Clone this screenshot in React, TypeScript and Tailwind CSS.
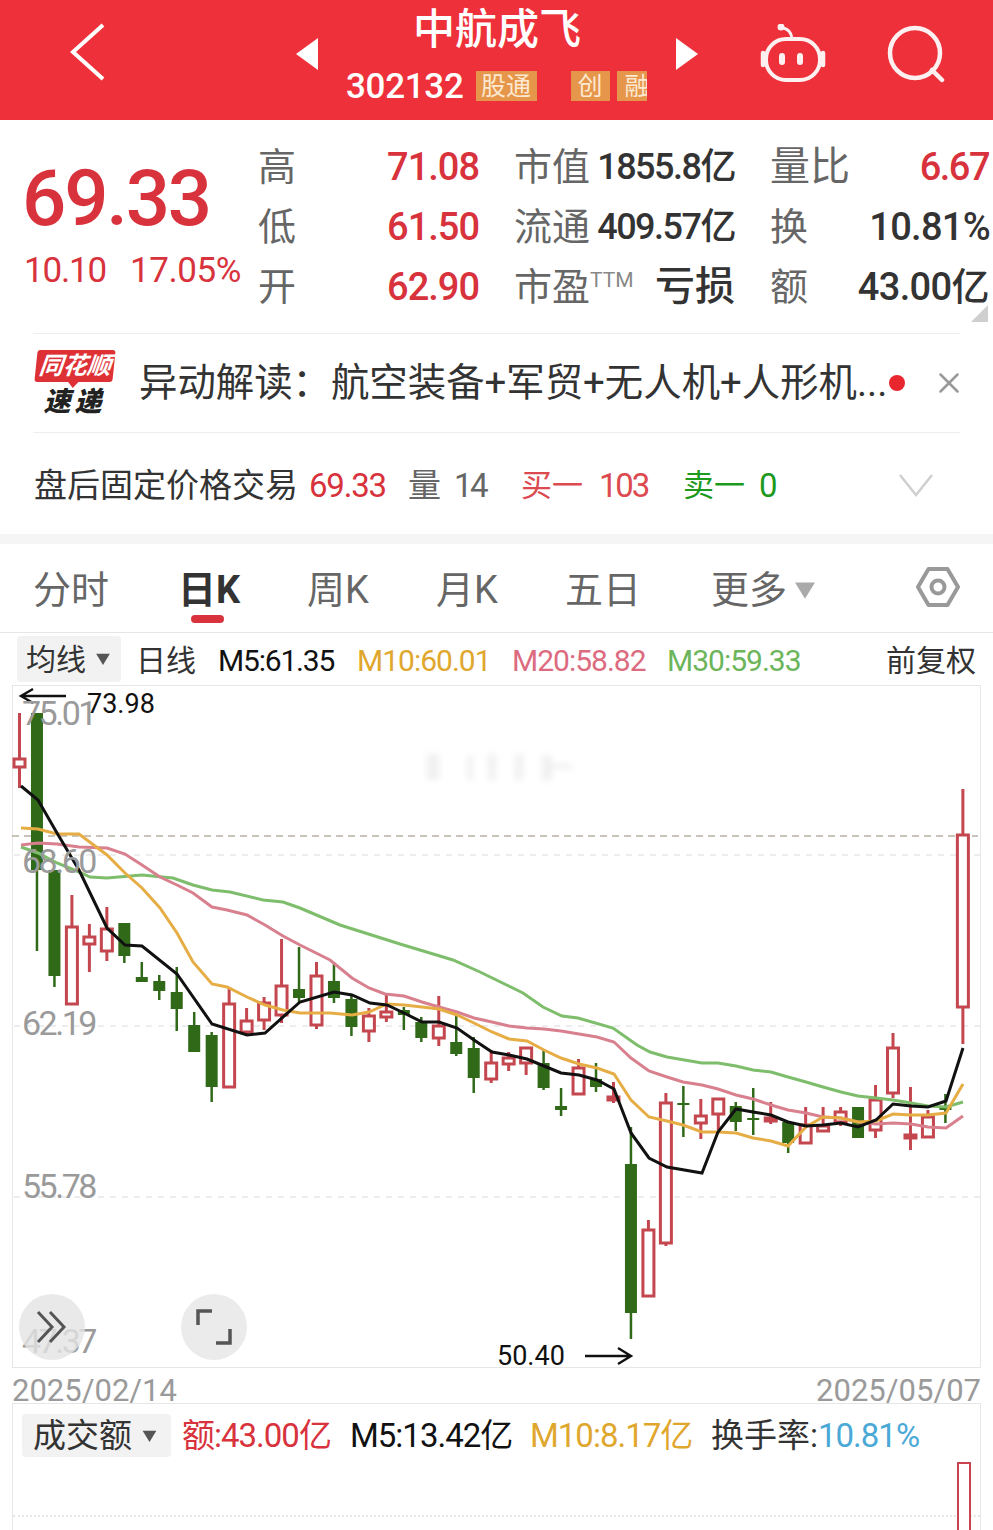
import { X } from "lucide-react";

const FONT_CJK = "font-['Roboto','Noto_Sans_CJK_SC',sans-serif]";

// top wick, body top, body bottom, low wick, colour
const CANDLES: [number, number, number, number, "r" | "g"][] = [
  [713, 759, 767, 788, "r"],
  [713, 713, 870, 951, "g"],
  [870, 870, 976, 987, "g"],
  [895, 927, 1004, 1004, "r"],
  [924, 937, 944, 972, "r"],
  [907, 929, 951, 961, "r"],
  [923, 923, 956, 963, "g"],
  [962, 977, 982, 982, "g"],
  [975, 981, 991, 1000, "g"],
  [967, 992, 1009, 1031, "g"],
  [1012, 1025, 1052, 1052, "g"],
  [1032, 1035, 1087, 1102, "g"],
  [987, 1004, 1087, 1088, "r"],
  [1008, 1021, 1032, 1036, "r"],
  [997, 1003, 1020, 1030, "r"],
  [939, 986, 1015, 1023, "r"],
  [947, 989, 998, 1003, "g"],
  [962, 976, 1025, 1029, "r"],
  [962, 981, 998, 1003, "g"],
  [995, 999, 1027, 1036, "g"],
  [1008, 1016, 1031, 1042, "r"],
  [995, 1012, 1017, 1022, "r"],
  [1007, 1010, 1015, 1030, "g"],
  [1017, 1022, 1038, 1042, "g"],
  [996, 1026, 1038, 1046, "r"],
  [1015, 1042, 1054, 1056, "g"],
  [1037, 1048, 1078, 1093, "g"],
  [1050, 1063, 1079, 1083, "r"],
  [1052, 1058, 1064, 1071, "r"],
  [1047, 1048, 1063, 1075, "r"],
  [1050, 1063, 1088, 1090, "g"],
  [1088, 1106, 1110, 1116, "g"],
  [1059, 1068, 1094, 1094, "r"],
  [1063, 1079, 1087, 1092, "g"],
  [1082, 1097, 1100, 1103, "r"],
  [1127, 1164, 1313, 1339, "g"],
  [1220, 1230, 1296, 1296, "r"],
  [1093, 1103, 1243, 1246, "r"],
  [1086, 1103, 1105, 1137, "g"],
  [1099, 1116, 1123, 1139, "r"],
  [1099, 1099, 1114, 1130, "r"],
  [1102, 1106, 1122, 1131, "g"],
  [1088, 1118, 1120, 1135, "g"],
  [1102, 1118, 1121, 1124, "r"],
  [1122, 1122, 1143, 1153, "g"],
  [1107, 1125, 1143, 1143, "r"],
  [1107, 1126, 1131, 1131, "r"],
  [1107, 1112, 1122, 1126, "r"],
  [1107, 1107, 1138, 1138, "g"],
  [1085, 1100, 1130, 1138, "r"],
  [1033, 1048, 1093, 1098, "r"],
  [1087, 1135, 1138, 1150, "r"],
  [1110, 1117, 1137, 1137, "r"],
  [1094, 1107, 1110, 1123, "g"],
  [789, 835, 1007, 1044, "r"],
];

const M30 =
  "21,847 38,853 57,863 79,872 90,877 107,878 142,875 173,878 193,885 212,890 230,892 263,900 283,902 300,908 340,925 400,944 453,960 480,972 523,993 543,1007 562,1016 578,1018 613,1028 637,1045 650,1052 667,1057 702,1063 718,1063 736,1066 753,1070 771,1072 788,1077 806,1082 823,1087 841,1092 858,1096 876,1098 893,1100 911,1103 928,1106 946,1107 963,1102";
const M20 =
  "21,845 38,843 57,844 79,847 107,848 125,854 142,865 160,877 177,885 193,893 212,907 227,910 247,915 265,925 283,936 300,945 330,960 352,978 369,988 385,994 404,996 422,1002 439,1007 457,1012 474,1018 492,1022 509,1026 527,1028 544,1029 561,1031 579,1034 597,1037 614,1042 631,1058 649,1071 667,1077 683,1082 702,1085 718,1089 736,1095 753,1099 771,1105 788,1110 806,1113 823,1117 841,1118 858,1122 876,1124 893,1123 911,1124 928,1127 946,1128 963,1116";
const M10 =
  "21,828 38,829 57,834 79,834 107,855 125,873 142,888 160,908 177,933 193,962 212,984 227,987 247,997 265,1005 283,1010 300,1013 330,1013 352,1015 369,1012 387,1004 404,1005 422,1007 439,1009 457,1015 474,1023 492,1032 509,1039 527,1041 544,1050 561,1058 579,1064 597,1068 614,1074 631,1100 649,1117 667,1121 683,1125 702,1132 718,1132 736,1133 753,1138 771,1141 788,1146 806,1127 823,1117 841,1118 858,1122 876,1121 893,1114 911,1115 928,1115 946,1113 963,1084";
const M5 =
  "21,786 38,800 57,833 79,870 107,928 125,945 142,946 177,974 212,1024 247,1035 265,1033 300,1002 334,992 352,995 370,1003 387,1005 404,1013 422,1022 439,1022 457,1028 474,1040 492,1052 509,1055 527,1059 544,1066 561,1073 579,1075 597,1080 614,1089 631,1133 649,1158 667,1167 702,1173 718,1132 736,1109 753,1112 771,1115 788,1122 806,1126 823,1125 841,1123 858,1127 876,1120 893,1104 911,1106 928,1107 946,1101 963,1048";

function Candle({ c, i }: { c: (typeof CANDLES)[number]; i: number }) {
  const x = 19.5 + i * 17.47;
  const [top, bodyTop, bodyBottom, low, kind] = c;
  if (kind === "g") {
    return (
      <g>
        <line x1={x} x2={x} y1={top} y2={low} stroke="#306a18" strokeWidth={2.5} />
        <rect x={x - 6} y={bodyTop} width={12} height={bodyBottom - bodyTop} fill="#306a18" />
      </g>
    );
  }
  return (
    <g>
      <line x1={x} x2={x} y1={top} y2={bodyTop} stroke="#c4474f" strokeWidth={3} />
      <line x1={x} x2={x} y1={bodyBottom} y2={low} stroke="#c4474f" strokeWidth={3} />
      <rect
        x={x - 5.5}
        y={bodyTop}
        width={11}
        height={bodyBottom - bodyTop}
        fill="#fff"
        stroke="#c4474f"
        strokeWidth={3}
      />
    </g>
  );
}

function Triangle({ className }: { className: string }) {
  return (
    <svg viewBox="0 0 16 14" className={className} fill="currentColor">
      <path d="M0 1h16L8 14z" />
    </svg>
  );
}

function StatLabel({ children }: { children: React.ReactNode }) {
  return <span className="text-[38px] leading-none text-[#666]">{children}</span>;
}

function AxisLabel({ className, children }: { className: string; children: React.ReactNode }) {
  return (
    <span className={`absolute left-[9px] text-[34px] leading-[40px] tracking-[-2.5px] text-[#9a9a9a] ${className}`}>
      {children}
    </span>
  );
}

function PriceChart() {
  return (
    <div className="relative mx-[12px] h-[683px] border border-[#e6e6e6]">
      <svg viewBox="12 685 969 683" className="absolute -left-px -top-px h-[683px] w-[969px]">
        {/* faded watermark */}
        <g className="blur-[3px]" fill="#f0f0f0">
          <rect x={427} y={754} width={12} height={26} />
          <rect x={467} y={756} width={6} height={24} />
          <rect x={488} y={754} width={8} height={26} />
          <rect x={515} y={754} width={8} height={26} />
          <rect x={542} y={756} width={10} height={24} />
          <rect x={552} y={764} width={20} height={5} />
        </g>
        {[855, 1026, 1197].map((y) => (
          <line key={y} x1={14} x2={980} y1={y} y2={y} stroke="#e8e8e8" strokeWidth={1.5} strokeDasharray="6 6" />
        ))}
        <line x1={12} x2={978} y1={836} y2={836} stroke="#b9b0a6" strokeWidth={1.5} strokeDasharray="7 5" />
        {CANDLES.map((c, i) => (
          <Candle key={i} c={c} i={i} />
        ))}
        <polyline points={M30} fill="none" stroke="#7dbd6b" strokeWidth={3} />
        <polyline points={M20} fill="none" stroke="#d9808f" strokeWidth={3} />
        <polyline points={M10} fill="none" stroke="#e6ad45" strokeWidth={3} />
        <polyline points={M5} fill="none" stroke="#111" strokeWidth={3} />
        <path d="M66 696H21M33 689l-12 7 12 7" fill="none" stroke="#111" strokeWidth={2.4} />
        <path d="M585 1356H631M618 1348l13 8-13 8" fill="none" stroke="#111" strokeWidth={2.4} />
      </svg>

      {/* axis labels */}
      <AxisLabel className="top-[7px]">75.01</AxisLabel>
      <AxisLabel className="top-[155px]">68.60</AxisLabel>
      <AxisLabel className="top-[317px]">62.19</AxisLabel>
      <AxisLabel className="top-[480px]">55.78</AxisLabel>
      <AxisLabel className="top-[635px]">47.37</AxisLabel>
      <span className="absolute left-[74px] top-[2px] text-[27px] leading-[32px] text-[#111]">73.98</span>
      <span className="absolute left-[484px] top-[654px] text-[27px] leading-[32px] text-[#111]">50.40</span>

      {/* overlay buttons */}
      <div className="absolute left-[6px] top-[608px] flex h-[66px] w-[66px] items-center justify-center rounded-full bg-[#e4e4e4]/80">
        <svg viewBox="0 0 34 34" className="h-[34px] w-[34px]" fill="none" stroke="#555" strokeWidth={3}>
          <path d="M3 2l14 15L3 32M15 2l14 15-14 15" />
        </svg>
      </div>
      <div className="absolute left-[168px] top-[608px] flex h-[66px] w-[66px] items-center justify-center rounded-full bg-[#ebebeb]">
        <svg viewBox="0 0 36 36" className="h-[36px] w-[36px]" fill="none" stroke="#555" strokeWidth={3.5}>
          <path d="M2 16V2h14M34 20v14H20" />
        </svg>
      </div>
    </div>
  );
}

export default function App() {
  return (
    <div className={`${FONT_CJK} h-[1530px] w-[993px] overflow-hidden bg-white`}>
      {/* Header */}
      <header className="flex h-[120px] items-center bg-[#ee303a] pb-[12px] text-white">
        <svg viewBox="0 0 36 58" className="ml-[69px] -mt-[5px] h-[58px] w-[36px]" fill="none" stroke="#fff" strokeWidth={4}>
          <path d="M34 2L4 29l30 27" />
        </svg>
        <div className="ml-[191px] h-0 w-0 border-y-[16px] border-r-[22px] border-y-transparent border-r-white" />
        <div className="ml-[28px] flex w-[330px] flex-col">
          <div className="pl-[67px] text-[42px] font-medium leading-[48px]">中航成飞</div>
          <div className="mt-[16px] flex h-[32px] items-center">
            <span className="text-[35px] font-medium leading-none tracking-[-0.3px]">302132</span>
            <span className="ml-[12px] flex h-[30px] w-[61px] items-center justify-center overflow-hidden bg-[#e5964a] text-[25px] leading-none text-[#fde8d0]">
              股通
            </span>
            <span className="ml-[34px] flex h-[30px] w-[39px] items-center justify-center bg-[#e5964a] text-[25px] leading-none text-[#fde8d0]">
              创
            </span>
            <span className="ml-[7px] flex h-[30px] w-[30px] items-center overflow-hidden whitespace-nowrap bg-[#e5964a] pl-[8px] text-[25px] leading-none text-[#fde8d0]">
              融
            </span>
          </div>
        </div>
        <div className="h-0 w-0 border-y-[16px] border-l-[22px] border-y-transparent border-l-white" />
        <svg viewBox="760 24 66 60" className="ml-[62px] h-[60px] w-[66px]" fill="none" stroke="#fdf0f0" strokeWidth={4}>
          <circle cx="781" cy="27" r="3.5" fill="#fdf0f0" stroke="none" />
          <path d="M783 28c5 1 8 4 9 10" strokeWidth={3} />
          <rect x="766" y="39" width="54" height="41" rx="20" />
          <path d="M763 53v12M823 53v12" strokeLinecap="round" strokeWidth={4.5} />
          <rect x="779" y="53" width="6" height="12" rx="3" fill="#fdf0f0" stroke="none" />
          <rect x="797" y="53" width="6" height="12" rx="3" fill="#fdf0f0" stroke="none" />
        </svg>
        <svg viewBox="885 24 60 60" className="ml-[59px] h-[60px] w-[60px]" fill="none" stroke="#fdf0f0" strokeWidth={4.5}>
          <circle cx="915" cy="53" r="25" />
          <path d="M932 70l10 10" strokeLinecap="round" />
        </svg>
      </header>

      {/* Quote */}
      <section className="flex h-[213px]">
        <div className="w-[258px] pl-[22px] pt-[41px] text-[#d8323c]">
          <div className="text-[78px] font-medium leading-[76px] tracking-[-2.2px]">69.33</div>
          <div className="mt-[14px] flex whitespace-nowrap pl-[2px] text-[35px] leading-[40px]">
            <span className="tracking-[-1.2px]">10.10</span>
            <span className="ml-[24px] tracking-[-0.4px]">17.05%</span>
          </div>
        </div>
        <div className="relative flex-1 pt-[17px]">
          <div className="grid grid-cols-[221px_221px_222px] gap-x-[35px]">
            <div className="flex h-[60px] items-center justify-between">
              <StatLabel>高</StatLabel>
              <span className="text-[38px] font-medium tracking-[-1px] text-[#d8323c]">71.08</span>
            </div>
            <div className="flex h-[60px] items-center justify-between">
              <StatLabel>市值</StatLabel>
              <span className="text-[36px] font-medium tracking-[-1.5px] text-[#333]">1855.8亿</span>
            </div>
            <div className="flex h-[60px] items-center justify-between">
              <span className="text-[40px] leading-none text-[#666]">量比</span>
              <span className="pr-[3px] text-[38px] font-medium tracking-[-1.5px] text-[#d8323c]">6.67</span>
            </div>
            <div className="flex h-[60px] items-center justify-between">
              <StatLabel>低</StatLabel>
              <span className="text-[38px] font-medium tracking-[-1px] text-[#d8323c]">61.50</span>
            </div>
            <div className="flex h-[60px] items-center justify-between">
              <StatLabel>流通</StatLabel>
              <span className="text-[36px] font-medium tracking-[-1.5px] text-[#333]">409.57亿</span>
            </div>
            <div className="flex h-[60px] items-center justify-between">
              <StatLabel>换</StatLabel>
              <span className="pr-[2px] text-[38px] font-medium tracking-[-0.7px] text-[#333]">10.81%</span>
            </div>
            <div className="flex h-[60px] items-center justify-between">
              <StatLabel>开</StatLabel>
              <span className="text-[38px] font-medium tracking-[-1px] text-[#d8323c]">62.90</span>
            </div>
            <div className="flex h-[60px] items-center justify-between">
              <span className="flex items-start">
                <StatLabel>市盈</StatLabel>
                <span className="text-[21px] leading-[24px] text-[#888]">TTM</span>
              </span>
              <span className="text-[40px] font-medium leading-none text-[#333]">亏损</span>
            </div>
            <div className="flex h-[60px] items-center justify-between">
              <StatLabel>额</StatLabel>
              <span className="pr-[3px] text-[38px] font-medium tracking-[-0.6px] text-[#333]">43.00亿</span>
            </div>
          </div>
          <div className="absolute bottom-[11px] right-[5px] h-0 w-0 border-b-[17px] border-l-[17px] border-b-[#cfcfcf] border-l-transparent" />
        </div>
      </section>

      {/* News */}
      <div className="mx-[33px] flex h-[100px] items-center border-y border-[#eeeeee]">
        <div className="flex w-[82px] shrink-0 flex-col items-center pl-[1px]">
          <div className="relative flex h-[32px] w-[78px] -skew-x-6 items-center justify-center rounded-[3px] bg-[#dd3136] text-[24px] font-bold italic leading-none text-white">
            同花顺
            <div className="absolute -bottom-[6px] left-[33px] h-0 w-0 border-x-[6px] border-t-[7px] border-x-transparent border-t-[#dd3136]" />
          </div>
          <div className="mt-[5px] text-[27px] font-black italic leading-[30px] tracking-[4px] text-[#222]">速递</div>
        </div>
        <div className="ml-[24px] w-[750px] shrink-0 whitespace-nowrap text-[38.4px] leading-none text-[#333]">
          异动解读：航空装备+军贸+无人机+人形机...
        </div>
        <div className="h-[16px] w-[16px] shrink-0 rounded-full bg-[#e8262e]" />
        <X size={34} strokeWidth={1.8} className="ml-[27px] shrink-0 text-[#999]" />
      </div>

      {/* After hours */}
      <div className="flex h-[101px] items-center pl-[34px] pt-[3px] text-[33px] leading-none">
        <span className="w-[275px] text-[#333]">盘后固定价格交易</span>
        <span className="w-[99px] tracking-[-1.2px] text-[#d8323c]">69.33</span>
        <span className="text-[#666]">量</span>
        <span className="ml-[13px] w-[67px] tracking-[-2.5px] text-[#666]">14</span>
        <span className="text-[31px] text-[#dc4a4f]">买一</span>
        <span className="ml-[16px] w-[84px] tracking-[-2.2px] text-[#dc4a4f]">103</span>
        <span className="text-[31px] text-[#1d9a1d]">卖一</span>
        <span className="ml-[14px] w-[140px] text-[#1d9a1d]">0</span>
        <svg viewBox="0 0 34 24" className="h-[24px] w-[34px]" fill="none" stroke="#cfcfcf" strokeWidth={2.5}>
          <path d="M1 2l16 20L33 2" />
        </svg>
      </div>

      <div className="h-[10px] bg-[#f5f5f5]" />

      {/* Period tabs */}
      <nav className="relative flex h-[89px] items-center border-b border-[#e6e6e6] pl-[33px] pt-[3px] text-[38px] leading-none text-[#666]">
        <span className="w-[145px]">分时</span>
        <span className="relative w-[129px] font-bold text-[#333]">
          日K
          <span className="absolute left-[13px] top-[44px] h-[8px] w-[33px] rounded-full bg-[#d8323c]" />
        </span>
        <span className="w-[129px]">周K</span>
        <span className="w-[129px]">月K</span>
        <span className="w-[146px]">五日</span>
        <span>更多</span>
        <Triangle className="ml-[8px] h-[18px] w-[20px] text-[#aaa]" />
        <svg viewBox="0 0 44 40" className="ml-[101px] -mt-[5px] h-[40px] w-[44px]" fill="none" stroke="#999" strokeWidth={4}>
          <path d="M12.5 2h19L42 20 31.500 38h-19L2 20z" strokeLinejoin="round" />
          <circle cx="22" cy="20" r="6.500" />
        </svg>
      </nav>

      {/* MA legend */}
      <div className="flex h-[52px] items-center text-[30px] leading-none">
        <div className="ml-[17px] flex h-[46px] w-[104px] items-center rounded-[4px] bg-[#f2f2f2] pl-[9px] text-[#333]">
          <span className="pt-[2px]">均线</span>
          <Triangle className="ml-[9px] h-[12px] w-[16px] text-[#555]" />
        </div>
        <span className="ml-[15px] w-[82px] pt-[3px] text-[#333]">日线</span>
        <span className="w-[139px] pt-[3px] tracking-[-1.2px] text-[#111]">M5:61.35</span>
        <span className="w-[155px] pt-[3px] tracking-[-1px] text-[#e0a72e]">M10:60.01</span>
        <span className="w-[155px] pt-[3px] tracking-[-1px] text-[#dc6b80]">M20:58.82</span>
        <span className="w-[219px] pt-[3px] tracking-[-1px] text-[#6cb55a]">M30:59.33</span>
        <span className="pt-[3px] text-[#333]">前复权</span>
      </div>

      <PriceChart />

      {/* Date axis */}
      <div className="flex h-[35px] items-center justify-between px-[12px] pt-[10px] text-[31px] leading-none text-[#9a9a9a]">
        <span>2025/02/14</span>
        <span>2025/05/07</span>
      </div>

      {/* Turnover */}
      <div className="relative mx-[12px] h-[200px] border-x border-t border-[#e6e6e6] pl-[9px] pt-[10px]">
        <div className="flex h-[43px] items-center whitespace-nowrap text-[33px] leading-none">
          <div className="flex h-[43px] w-[149px] items-center rounded-[4px] bg-[#f2f2f2] pl-[11px] text-[#333]">
            成交额
            <Triangle className="ml-[9px] h-[12px] w-[17px] text-[#555]" />
          </div>
          <span className="ml-[11px] w-[168px] tracking-[-1px] text-[#d8323c]">额:43.00亿</span>
          <span className="w-[180px] tracking-[-1px] text-[#111]">M5:13.42亿</span>
          <span className="w-[181px] tracking-[-1px] text-[#e0a72e]">M10:8.17亿</span>
          <span className="text-[#333]">换手率:</span>
          <span className="tracking-[-1px] text-[#4aa9d6]">10.81%</span>
        </div>
        <div className="absolute left-0 right-0 top-[111px] border-t-2 border-dotted border-[#e6e6e6]" />
        <div className="absolute left-[944px] top-[58px] h-[100px] w-[14px] border-2 border-b-0 border-[#c8444f] bg-white" />
      </div>
    </div>
  );
}
